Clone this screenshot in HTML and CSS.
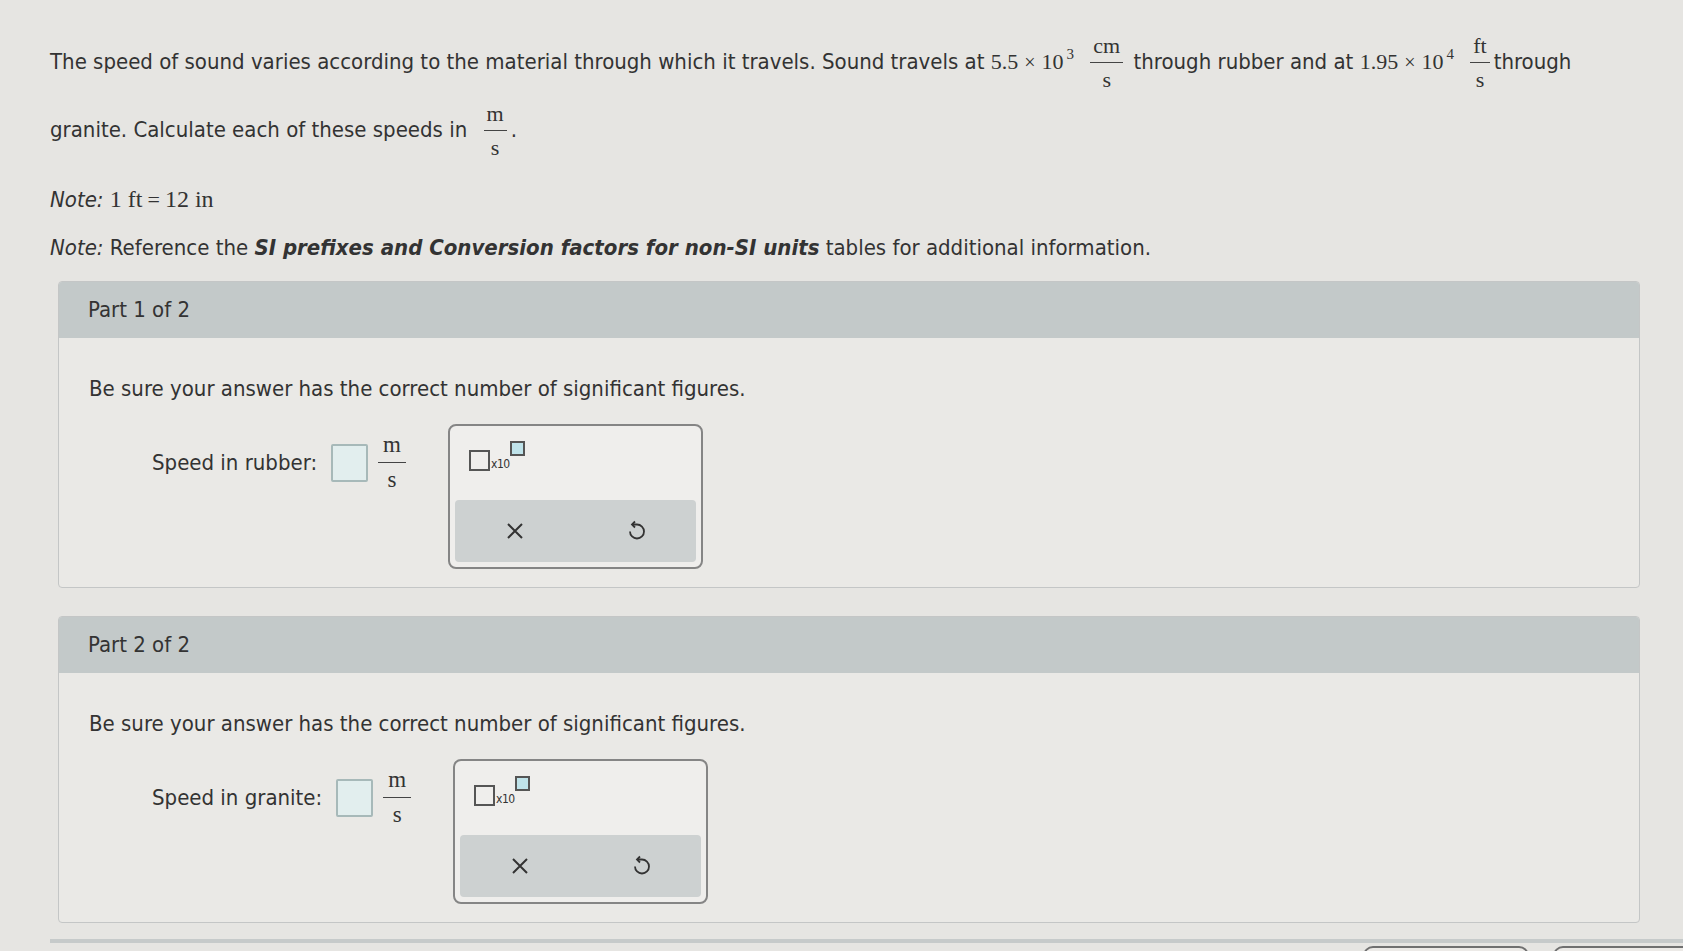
FILE: index.html
```html
<!DOCTYPE html>
<html lang="en">

<head>
    <meta charset="UTF-8">
    <meta name="viewport" content="width=device-width, initial-scale=1.0">
    <title>Speed of sound</title>
    <link rel="stylesheet" href="styles.css">
</head>

<body>
    <div class="page">
        <p class="intro">
            The speed of sound varies according to the material through which it travels. Sound travels at
            <span class="math">5.5<span class="op">&times;</span>10<sup>3</sup></span>
            <span class="frac"><span class="num">cm</span><span class="den">s</span></span>
            through rubber and at
            <span class="math">1.95<span class="op">&times;</span>10<sup>4</sup></span>
            <span class="frac"><span class="num">ft</span><span class="den">s</span></span>through
            granite. Calculate each of these speeds in
            <span class="frac"><span class="num">m</span><span class="den">s</span></span>.
        </p>

        <p class="note first"><i>Note:</i> <span class="math big">1 ft<span class="op">=</span>12 in</span></p>
        <p class="note"><i>Note:</i> Reference the <b><i>SI prefixes and Conversion factors for non-SI units</i></b> tables for additional information.</p>

        <div class="part">
            <div class="part-head">Part 1 of 2</div>
            <div class="part-body">
                <p class="hint">Be sure your answer has the correct number of significant figures.</p>
                <div class="answer-row">
                    <div class="answer">
                        <span class="label">Speed in rubber:</span>
                        <span class="input"></span>
                        <span class="frac unit"><span class="num">m</span><span class="den">s</span></span>
                    </div>
                    <div class="tools">
                        <div class="sci">
                            <span class="sci-box"></span><span class="sci-x">x10</span><span class="sci-exp"></span>
                        </div>
                        <div class="tool-bar">
                            <button class="tool-btn">
                                <svg width="20" height="20" viewBox="0 0 20 20"><path d="M3 3 L17 17 M17 3 L3 17" stroke="#333" stroke-width="2" fill="none"/></svg>
                            </button>
                            <button class="tool-btn">
                                <svg width="22" height="22" viewBox="0 0 22 22"><path d="M7 4.5 L12 4.5 A7 7 0 1 1 5 11.5" stroke="#333" stroke-width="1.8" fill="none"/><path d="M10 1.5 L7 4.5 L10 7.5" stroke="#333" stroke-width="1.8" fill="none"/></svg>
                            </button>
                        </div>
                    </div>
                </div>
            </div>
        </div>

        <div class="part">
            <div class="part-head">Part 2 of 2</div>
            <div class="part-body">
                <p class="hint">Be sure your answer has the correct number of significant figures.</p>
                <div class="answer-row">
                    <div class="answer">
                        <span class="label">Speed in granite:</span>
                        <span class="input"></span>
                        <span class="frac unit"><span class="num">m</span><span class="den">s</span></span>
                    </div>
                    <div class="tools">
                        <div class="sci">
                            <span class="sci-box"></span><span class="sci-x">x10</span><span class="sci-exp"></span>
                        </div>
                        <div class="tool-bar">
                            <button class="tool-btn">
                                <svg width="20" height="20" viewBox="0 0 20 20"><path d="M3 3 L17 17 M17 3 L3 17" stroke="#333" stroke-width="2" fill="none"/></svg>
                            </button>
                            <button class="tool-btn">
                                <svg width="22" height="22" viewBox="0 0 22 22"><path d="M7 4.5 L12 4.5 A7 7 0 1 1 5 11.5" stroke="#333" stroke-width="1.8" fill="none"/><path d="M10 1.5 L7 4.5 L10 7.5" stroke="#333" stroke-width="1.8" fill="none"/></svg>
                            </button>
                        </div>
                    </div>
                </div>
            </div>
        </div>

        <div class="footer">
            <button class="foot-btn"></button>
            <button class="foot-btn wide"></button>
        </div>
    </div>
</body>

</html>
```

FILE: styles.css
```css
body {
    margin: 0;
    background-color: #e6e5e2;
    color: #333;
    font-family: "DejaVu Sans Condensed", "DejaVu Sans", sans-serif;
    font-size: 22px;
}

.page {
    box-sizing: border-box;
    height: 951px;
    padding: 28px 0 0 50px;
    overflow: hidden;
}

.intro {
    margin: 0;
    max-width: 1560px;
    line-height: 68px;
}

.math {
    font-family: "Liberation Serif", serif;
    font-size: 22px;
}

.math .op {
    margin: 0 6px;
    font-size: 20px;
}

.math.big {
    font-size: 24px;
}

.math.big .op {
    margin: 0 5px;
    font-size: 22px;
}

.math sup {
    font-size: 15px;
    vertical-align: 10px;
    line-height: 0;
    margin-left: 3px;
}

.frac {
    display: inline-flex;
    flex-direction: column;
    vertical-align: middle;
    text-align: center;
    font-family: "Liberation Serif", serif;
    font-size: 22px;
    line-height: 22px;
    margin: 0 4px 0 10px;
}

.frac .num {
    border-bottom: 1px solid #444;
    padding: 0 3px 5px;
}

.frac .den {
    padding-top: 6px;
}

.note {
    margin: 0;
    line-height: 48px;
}

.note.first {
    margin-top: 11px;
}

.part {
    margin: 9px 43px 0 8px;
    border: 1px solid #c4c6c6;
    border-radius: 4px;
    background-color: #eae9e6;
    overflow: hidden;
}

.part + .part {
    margin-top: 28px;
}

.part-head {
    height: 56px;
    line-height: 56px;
    padding-left: 29px;
    background-color: #c3c9c9;
}

.part-body {
    padding: 38px 30px 18px;
}

.hint {
    margin: 0;
    line-height: 26px;
}

.answer-row {
    display: flex;
    align-items: flex-start;
    margin: 22px 0 0 63px;
}

.answer {
    display: flex;
    align-items: center;
    margin-top: 10px;
}

.input {
    width: 33px;
    height: 34px;
    margin-left: 14px;
    border: 2px solid #a7b9b9;
    border-radius: 2px;
    background-color: #e2eeee;
}

.frac.unit {
    margin: 0 0 0 10px;
    font-size: 23px;
}

.frac.unit .num {
    padding: 0 5px 6px;
}

.tools {
    display: flex;
    flex-direction: column;
    justify-content: space-between;
    width: 251px;
    height: 141px;
    margin-left: 42px;
    border: 2px solid #858585;
    border-radius: 8px;
    background-color: #efeeec;
}

.sci {
    display: flex;
    align-items: flex-end;
    padding: 24px 0 0 19px;
}

.sci-box {
    width: 17px;
    height: 17px;
    border: 2px solid #555;
}

.sci-x {
    font-family: "DejaVu Sans Condensed", "DejaVu Sans", sans-serif;
    font-size: 12px;
    line-height: 13px;
    margin-left: 1px;
    letter-spacing: -0.5px;
}

.sci-exp {
    align-self: flex-start;
    width: 11px;
    height: 11px;
    margin-top: -9px;
    border: 2px solid #555;
    background-color: #bfe3ea;
}

.tool-bar {
    display: flex;
    height: 62px;
    margin: 0 5px 5px;
    border-radius: 4px;
    background-color: #cdd1d1;
}

.tool-btn {
    flex: 1;
    display: flex;
    align-items: center;
    justify-content: center;
    border: none;
    background: none;
    padding: 0;
}

.footer {
    display: flex;
    gap: 24px;
    justify-content: flex-end;
    margin-top: 16px;
    border-top: 4px solid #c6caca;
    padding-top: 3px;
}

.foot-btn {
    width: 166px;
    height: 40px;
    border: 2px solid #707070;
    border-radius: 10px;
    background-color: #eceae7;
}

.foot-btn.wide {
    width: 150px;
    margin-right: -20px;
}
```
